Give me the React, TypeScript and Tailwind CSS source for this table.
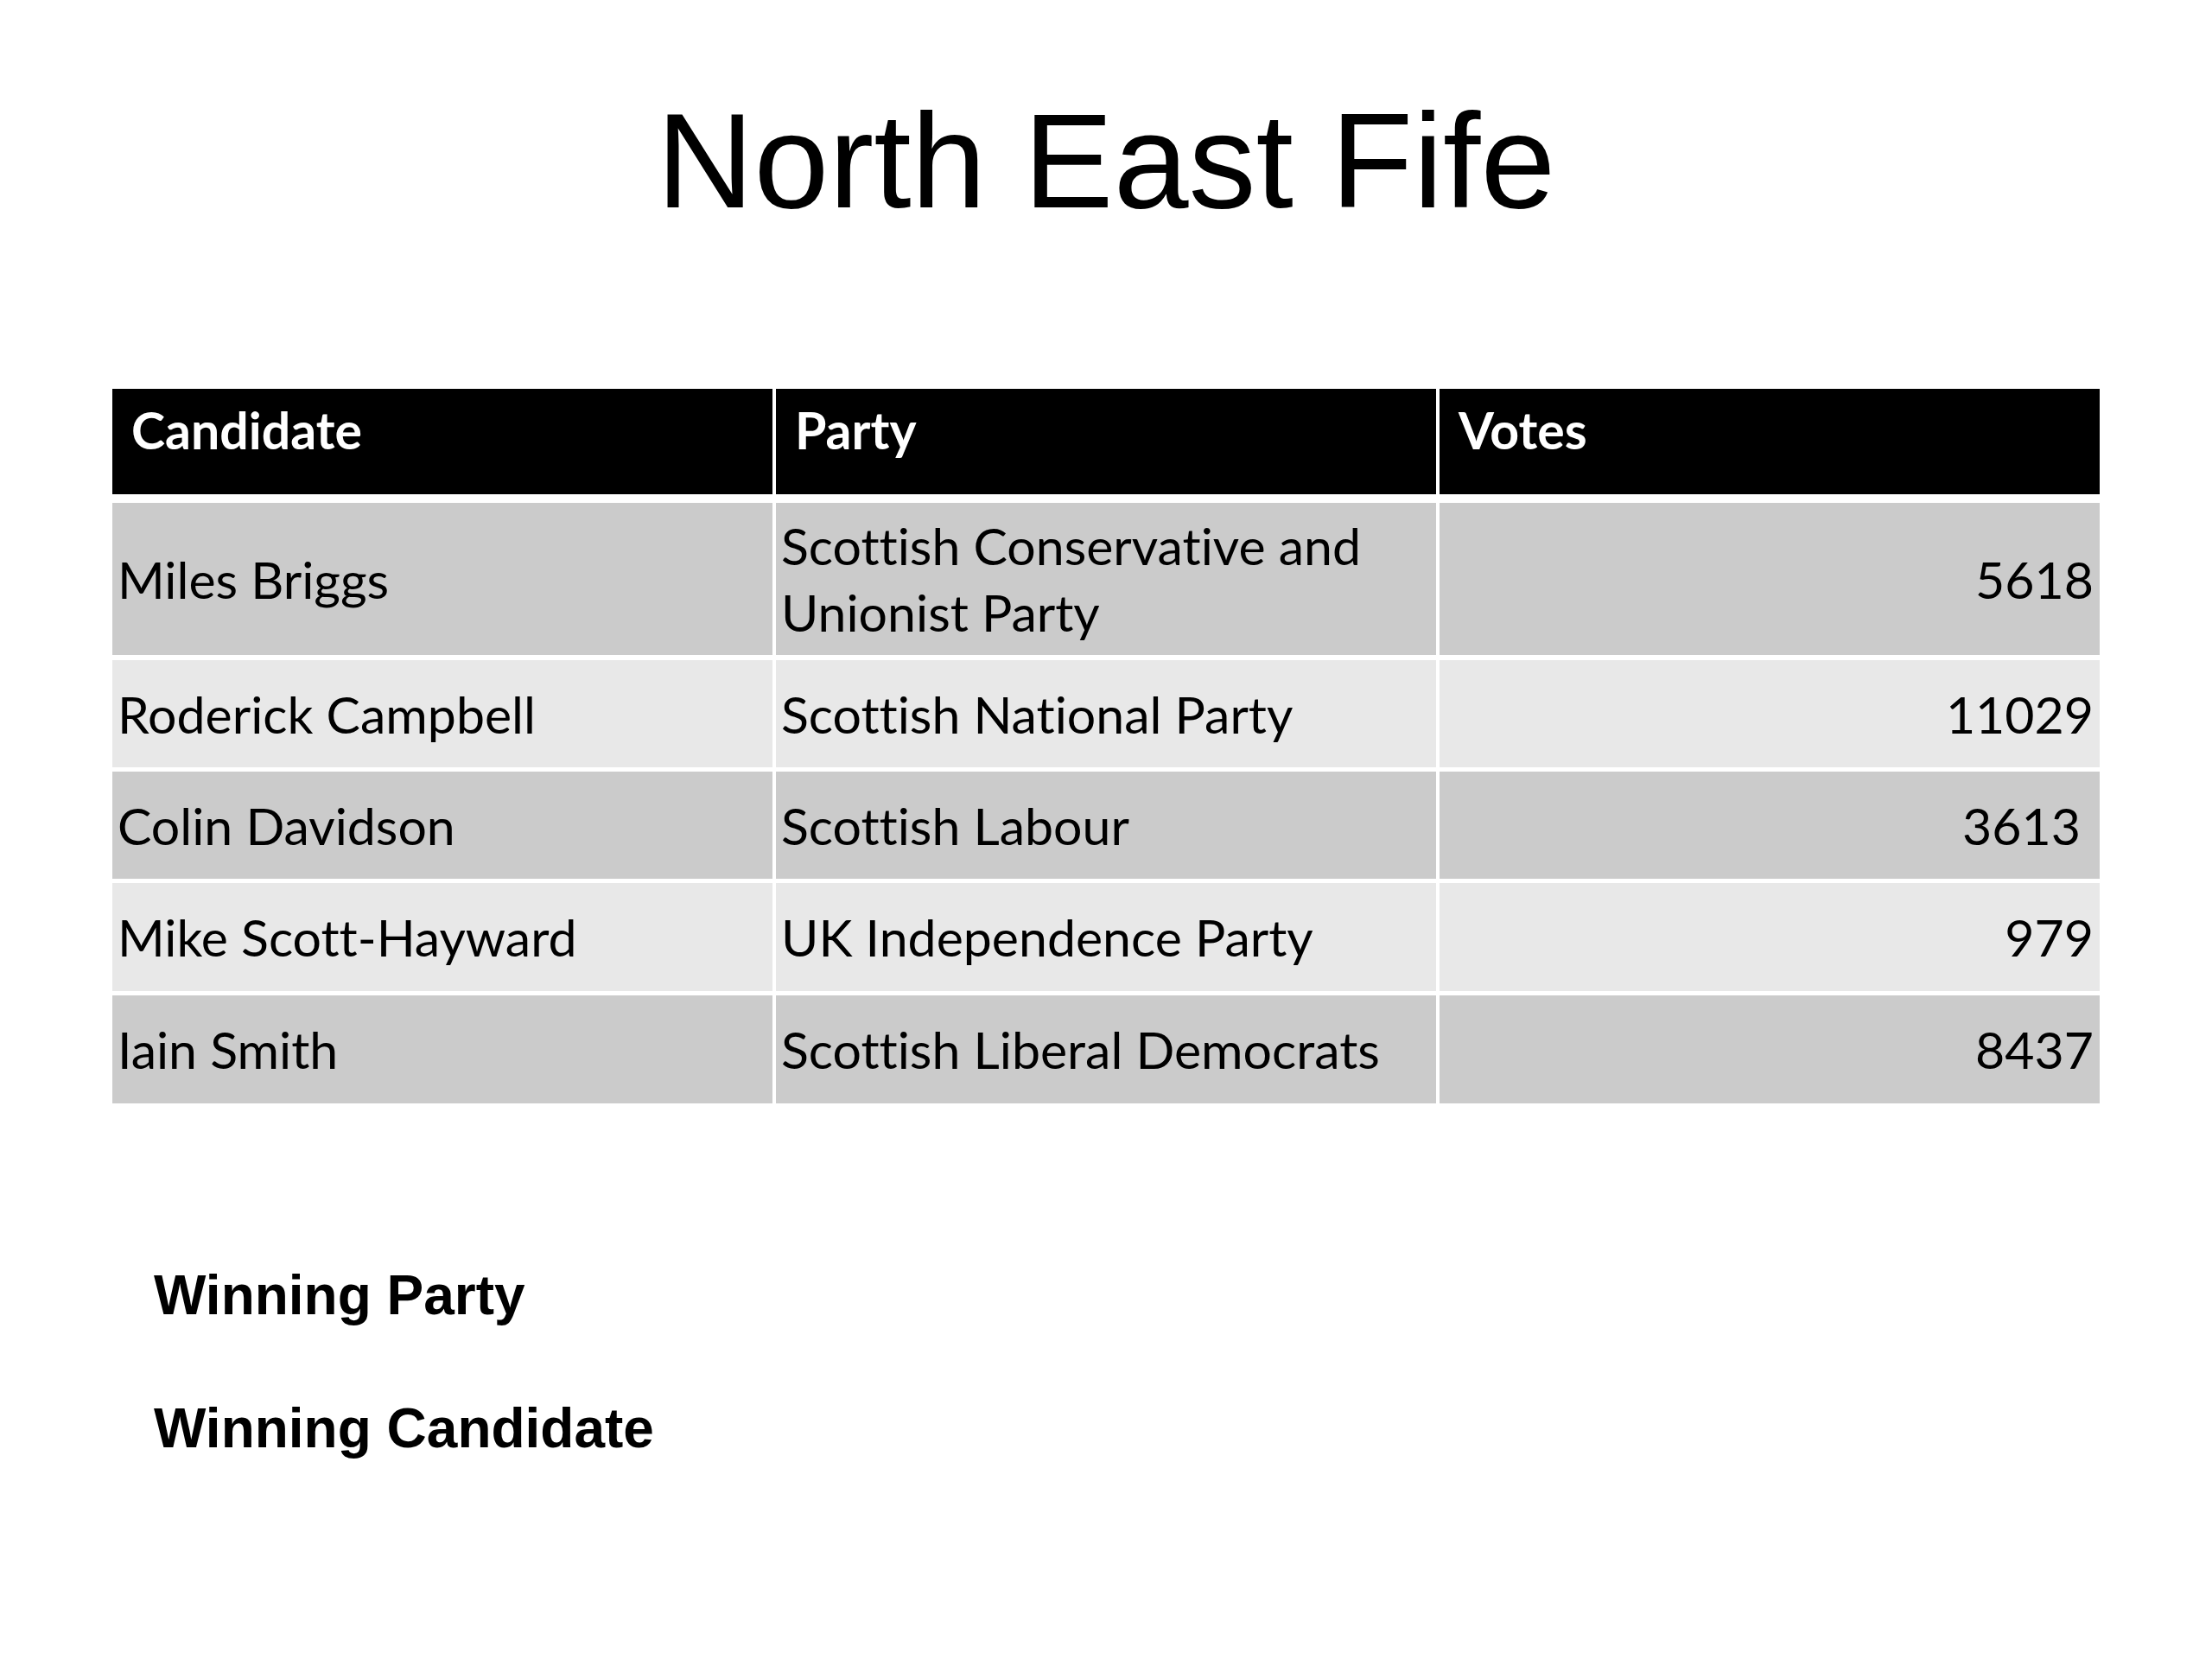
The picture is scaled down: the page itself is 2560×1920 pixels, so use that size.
import React from "react";

type Row = { name: string; party: React.ReactNode; votes: string; dark: boolean; h: string; gap: string };

const rows: Row[] = [
  { name: "Miles Briggs", party: <>Scottish Conservative and<br />Unionist Party</>, votes: "5618", dark: true, h: "h-[176px]", gap: "mt-[10px]" },
  { name: "Roderick Campbell", party: "Scottish National Party", votes: "11029", dark: false, h: "h-[124px]", gap: "mt-[6px]" },
  { name: "Colin Davidson", party: "Scottish Labour", votes: "3613\u00A0", dark: true, h: "h-[124px]", gap: "mt-[5px]" },
  { name: "Mike Scott-Hayward", party: "UK Independence Party", votes: "979", dark: false, h: "h-[125px]", gap: "mt-[5px]" },
  { name: "Iain Smith", party: "Scottish Liberal Democrats", votes: "8437", dark: true, h: "h-[125px]", gap: "mt-[5px]" },
];

export default function App() {
  return (
    <div className="w-full h-[1920px] bg-white text-black pt-[108px] px-[130px]">
      <h1 className="text-center text-[156px] leading-none h-[156px] font-normal font-['Liberation_Sans',Arial,sans-serif]">
        North East Fife
      </h1>

      <div className="mt-[186px] font-['Lato',sans-serif] text-[59px] [font-variant-ligatures:none]">
        <div className="grid grid-cols-3 gap-x-[4px] h-[122px]">
          {["Candidate", "Party", "Votes"].map((t) => (
            <div key={t} className="bg-black text-white font-bold pl-[22px] pt-[13px] leading-[70px]">
              {t}
            </div>
          ))}
        </div>
        {rows.map((r) => (
          <div key={r.name} className={`grid grid-cols-3 gap-x-[4px] ${r.h} ${r.gap}`}>
            <div className={`${r.dark ? "bg-[#cbcbcb]" : "bg-[#e8e8e8]"} flex items-center pl-[6px] leading-[77px]`}>
              {r.name}
            </div>
            <div className={`${r.dark ? "bg-[#cbcbcb]" : "bg-[#e8e8e8]"} flex items-center pl-[6px] leading-[77px]`}>
              <span>{r.party}</span>
            </div>
            <div className={`${r.dark ? "bg-[#cbcbcb]" : "bg-[#e8e8e8]"} flex items-center justify-end pr-[7px] leading-[77px] whitespace-pre`}>
              {r.votes}
            </div>
          </div>
        ))}
      </div>

      <div className="pl-[48px] mt-[190px] font-['Liberation_Sans',Arial,sans-serif] font-bold text-[64px] leading-none">
        <div>Winning Party</div>
        <div className="mt-[90px]">Winning Candidate</div>
      </div>
    </div>
  );
}
